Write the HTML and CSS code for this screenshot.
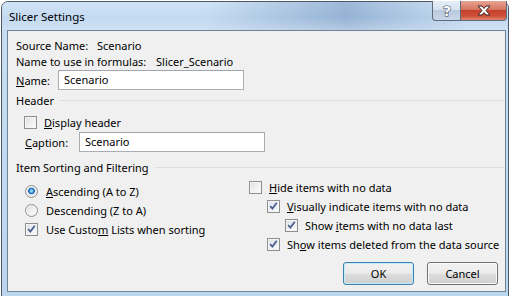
FILE: index.html
```html
<!DOCTYPE html>
<html>
<head>
    <title>Slicer Settings</title>
    <link rel="stylesheet" href="styles.css">
</head>
<body>
    <div class="window">
        <div class="titlebar">
            <span class="title">Slicer Settings</span>
            <div class="caption-buttons">
                <div class="cap-btn help">
                    <svg width="28" height="19" viewBox="0 0 28 19">
                        <text x="14" y="14.5" text-anchor="middle" class="help-glyph">?</text>
                    </svg>
                </div>
                <div class="cap-btn close">
                    <svg width="46" height="19" viewBox="0 0 46 19">
                        <path d="M17 5 h4 l2 2.5 l2 -2.5 h4 l-4 4.5 l4 4.5 h-4 l-2 -2.5 l-2 2.5 h-4 l4 -4.5 z" fill="#fff" stroke="#3b2320" stroke-width="1" stroke-linejoin="round"/>
                    </svg>
                </div>
            </div>
        </div>

        <div class="client">
            <div class="row info">
                <span class="lbl-source">Source Name:</span>
                <span>Scenario</span>
            </div>
            <div class="row info">
                <span class="lbl-formula">Name to use in formulas:</span>
                <span>Slicer_Scenario</span>
            </div>
            <div class="row field name-row">
                <label class="lbl-name"><u>N</u>ame:</label>
                <div class="textbox">Scenario</div>
            </div>

            <div class="group-head header-head">
                <span>Header</span>
                <div class="rule"></div>
            </div>
            <div class="row check-row display-row">
                <span class="checkbox"></span>
                <span><u>D</u>isplay header</span>
            </div>
            <div class="row field caption-row">
                <label class="lbl-caption"><u>C</u>aption:</label>
                <div class="textbox">Scenario</div>
            </div>

            <div class="group-head sort-head">
                <span>Item Sorting and Filtering</span>
                <div class="rule"></div>
            </div>

            <div class="columns">
                <div class="col-left">
                    <div class="opt-row">
                        <span class="radio checked"></span>
                        <span><u>A</u>scending (A to Z)</span>
                    </div>
                    <div class="opt-row">
                        <span class="radio"></span>
                        <span>Descendin<u>g</u> (Z to A)</span>
                    </div>
                    <div class="opt-row">
                        <span class="checkbox checked"></span>
                        <span>Use Custo<u>m</u> Lists when sorting</span>
                    </div>
                </div>
                <div class="col-right">
                    <div class="opt-row">
                        <span class="checkbox"></span>
                        <span><u>H</u>ide items with no data</span>
                    </div>
                    <div class="opt-row indent-1">
                        <span class="checkbox checked"></span>
                        <span><u>V</u>isually indicate items with no data</span>
                    </div>
                    <div class="opt-row indent-2">
                        <span class="checkbox checked"></span>
                        <span>Show <u>i</u>tems with no data last</span>
                    </div>
                    <div class="opt-row indent-1">
                        <span class="checkbox checked"></span>
                        <span>Sh<u>o</u>w items deleted from the data source</span>
                    </div>
                </div>
            </div>

            <div class="button-row">
                <button class="btn default">OK</button>
                <button class="btn">Cancel</button>
            </div>
        </div>
    </div>
</body>
</html>
```

FILE: styles.css
```css
body {
    margin: 0;
    background: #ffffff;
    overflow: hidden;
    font-family: "Noto Sans", "Open Sans", sans-serif;
    font-size: 11px;
    color: #000000;
    white-space: nowrap;
}

.window {
    box-sizing: border-box;
    width: 508px;
    height: 300px;
    margin: 1px 0 0 1px;
    border: 1px solid #4a5866;
    border-radius: 7px 7px 0 0;
    background: linear-gradient(180deg, #c9def3 0%, #bcd5ef 100%);
}

/* title bar */
.titlebar {
    height: 28px;
    display: flex;
    justify-content: space-between;
    align-items: flex-start;
    background: linear-gradient(180deg, rgba(255,255,255,0) 55%, rgba(255,255,255,0.35) 100%),
                linear-gradient(90deg, rgba(255,255,255,0) 0%, rgba(255,255,255,0) 40%, rgba(80,120,170,0.4) 68%, rgba(255,255,255,0) 92%),
                linear-gradient(180deg, #d2e4f6 0%, #c2d9f1 60%, #b7d0ec 100%);
    border-radius: 6px 6px 0 0;
}
.title { padding: 8px 0 0 7px; font-size: 11.5px; line-height: 14px; color: #000; }

.caption-buttons { display: flex; margin: -1px 1px 0 0; }
.cap-btn { height: 19px; border: 1px solid #5d6b7b; border-top: none; }
.cap-btn svg { display: block; }
.help {
    width: 27px;
    border-radius: 0 0 0 4px;
    border-right: none;
    background: linear-gradient(180deg, #e5eef8 0%, #d4e1ef 50%, #b8c9dc 50%, #c9d8e8 100%);
}
.close {
    width: 45px;
    border-radius: 0 0 4px 0;
    background: linear-gradient(180deg, #e8a493 0%, #d6755f 45%, #c4402a 50%, #d0503a 80%, #e0896e 100%);
}
.help-glyph {
    font-family: "DejaVu Sans", sans-serif;
    font-size: 14px;
    font-weight: bold;
    fill: #ffffff;
    stroke: #2e3a48;
    stroke-width: 1;
    paint-order: stroke;
}

/* client area */
.client {
    box-sizing: border-box;
    height: 262px;
    margin: 0 2px 0 5px;
    padding: 6px 0 0 8px;
    border: 1px solid #6f8397;
    background: #f0f0f0;
}

.row { display: flex; align-items: center; }
.info { height: 16px; }
.lbl-source { width: 81px; }
.lbl-formula { width: 140px; }

.field { height: 20px; }
.name-row { margin-top: 1px; }
.lbl-name { width: 42px; }
.caption-row { margin-top: 2px; padding-left: 9px; }
.lbl-caption { width: 54px; }

.textbox {
    box-sizing: border-box;
    width: 186px;
    height: 20px;
    padding: 0 5px;
    line-height: 18px;
    background: #ffffff;
    border: 1px solid #abadb3;
    border-top-color: #a3a6ad;
}

.group-head { display: flex; align-items: center; height: 16px; margin-right: 1px; }
.group-head .rule { flex: 1; height: 1px; margin-left: 6px; background: #d5dfe5; }
.header-head { margin-top: 2px; }
.sort-head { margin-top: 7px; }

.check-row { height: 16px; padding-left: 8px; gap: 7px; }
.display-row { margin-top: 6px; }

/* checkbox and radio */
.checkbox, .radio {
    box-sizing: border-box;
    display: inline-block;
    flex: none;
    width: 13px;
    height: 13px;
    border: 1px solid #8e8f8f;
    background: linear-gradient(135deg, #dcdcdc 0%, #f0f0f0 50%, #fdfdfd 100%);
    box-shadow: inset 0 0 0 1px #f4f4f4;
}
.checkbox.checked {
    background: url("data:image/svg+xml;utf8,<svg xmlns='http://www.w3.org/2000/svg' width='11' height='11' viewBox='0 0 11 11'><path d='M2.2 5.2 L4.4 7.6 L8.8 1.8' fill='none' stroke='%234a5f8c' stroke-width='1.8'/></svg>") center / 11px 11px no-repeat,
                linear-gradient(135deg, #d8dde6 0%, #eef1f5 55%, #fbfcfd 100%);
}
.radio { border-radius: 50%; }
.radio.checked {
    background: radial-gradient(circle at 50% 45%, #8fd3f7 0 1px, #2f8fd8 2px, #1b5ea8 3px, #dfe4ea 3.6px, #eef0f2 100%);
}

.columns { display: flex; }
.col-left { width: 224px; padding: 7px 0 0 9px; }
.col-right { padding-top: 3px; }
.opt-row { display: flex; align-items: center; gap: 7px; height: 19px; }
.col-left .opt-row { gap: 8px; }
.indent-1 { padding-left: 18px; }
.indent-2 { padding-left: 36px; }

/* buttons */
.button-row { display: flex; justify-content: flex-end; gap: 13px; margin-top: 8px; padding-right: 7px; }
.btn {
    width: 71px;
    height: 23px;
    margin: 0;
    padding: 0;
    font-family: inherit;
    font-size: 11px;
    color: #000;
    border: 1px solid #707070;
    border-radius: 3px;
    background: linear-gradient(180deg, #f2f2f2 0%, #ebebeb 48%, #dddddd 52%, #cfcfcf 100%);
    box-shadow: inset 0 0 0 1px #fbfbfb;
}
.btn.default {
    border-color: #3c7fb1;
    box-shadow: inset 0 0 0 1px #c5ecfc;
}
```
